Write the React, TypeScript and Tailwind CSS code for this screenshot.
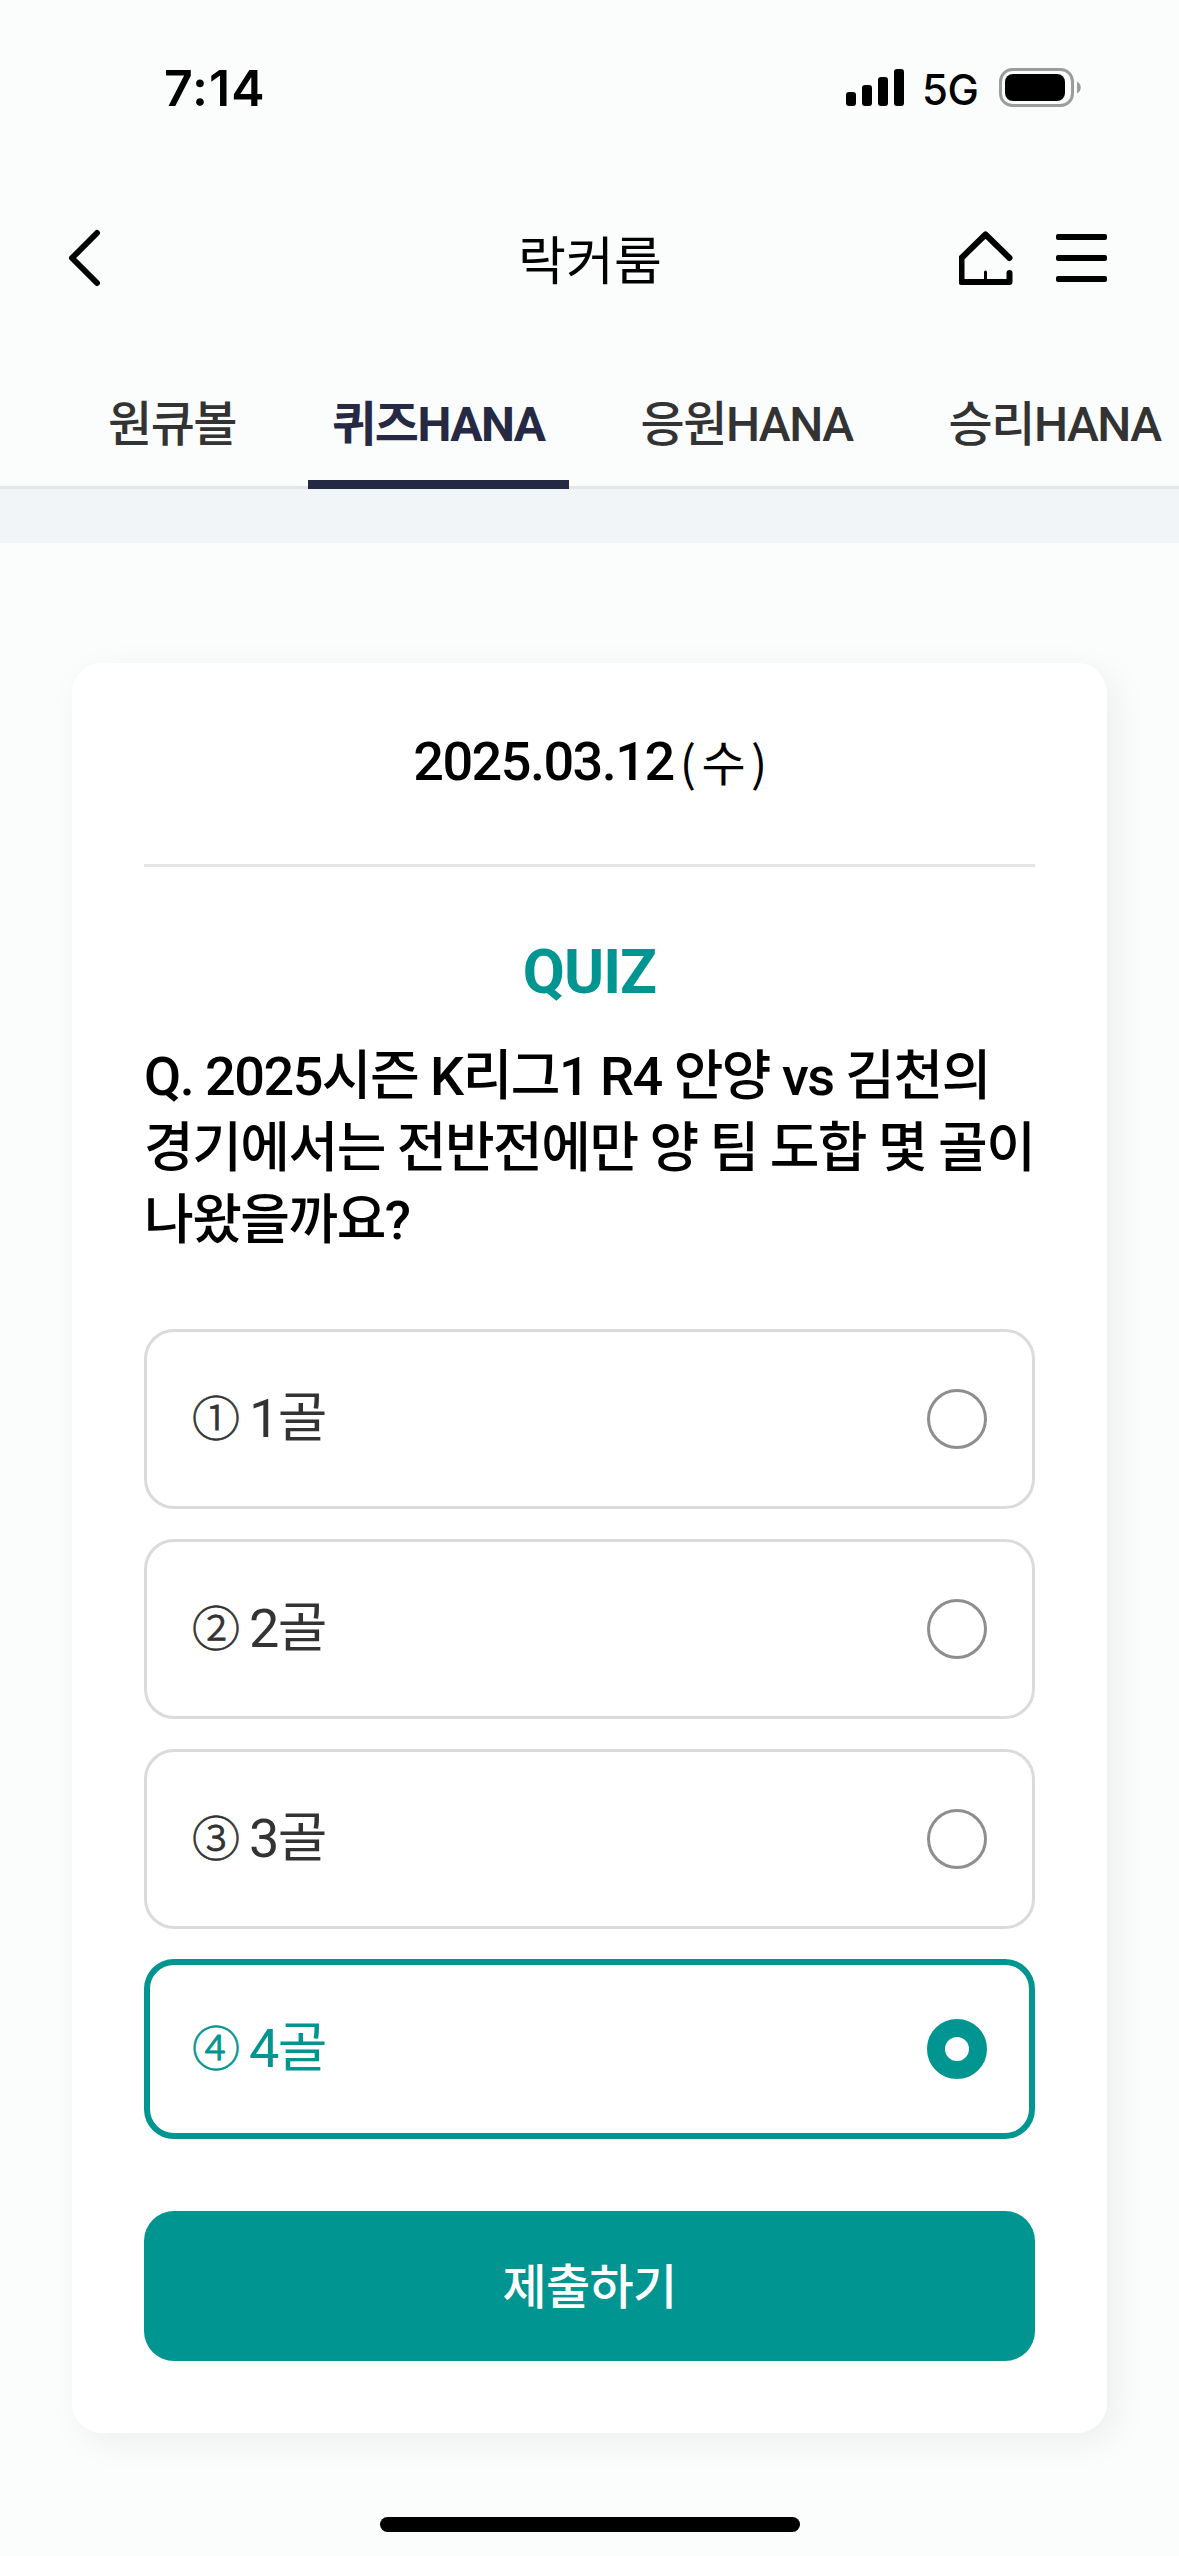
import React, { useState } from "react";
import clsx from "clsx";

const tabs = [
  { id: "ball", name: "원큐볼" },
  { id: "quiz", name: "퀴즈HANA" },
  { id: "cheer", name: "응원HANA" },
  { id: "win", name: "승리HANA" },
];

const options = [
  { id: 1, mark: "①", label: "1골" },
  { id: 2, mark: "②", label: "2골" },
  { id: 3, mark: "③", label: "3골" },
  { id: 4, mark: "④", label: "4골" },
];

const question = ["Q. 2025시즌 K리그1 R4 안양 vs 김천의", "경기에서는 전반전에만 양 팀 도합 몇 골이", "나왔을까요?"];

function StatusBar() {
  return (
    <div className="h-[177px] pt-[58px] pl-[164px] pr-[97px] flex justify-between items-start text-black">
      <span className="font-[Inter] font-semibold text-[50px] leading-[60px] tracking-[1px]">7:14</span>
      <div className="flex items-start pt-[10px]">
        <svg width="58" height="38" viewBox="0 0 58 38" className="mt-px">
          <rect x="0" y="23" width="10" height="14" rx="3" />
          <rect x="16" y="16" width="10" height="21" rx="3" />
          <rect x="32" y="8" width="10" height="29" rx="3" />
          <rect x="48" y="0" width="10" height="37" rx="3" />
        </svg>
        <span className="ml-[18px] w-[77px] font-[Inter] font-medium text-[42px] leading-[44px] tracking-[-0.5px]">5G</span>
        <svg width="83" height="40" viewBox="0 0 83 40">
          <rect x="1.5" y="1.5" width="72" height="36" rx="12" fill="none" stroke="#9b9c9b" strokeWidth="3" />
          <rect x="6" y="6" width="60" height="27" rx="8" />
          <path d="M78 13.5c5 2.500 5 9.500 0 12z" fill="#9b9c9b" />
        </svg>
      </div>
    </div>
  );
}

function Header() {
  return (
    <header className="h-[168px] pl-[68px] pr-[72px] flex items-start justify-between">
      <button aria-label="뒤로" className="mt-[52px] w-[151px]">
        <svg width="34" height="58" viewBox="0 0 34 58" fill="none" stroke="#000" strokeWidth="6" strokeLinecap="round" strokeLinejoin="round">
          <path d="M29 4L4 29l25 25" />
        </svg>
      </button>
      <h1 className="mt-[50px] pl-[4px] text-[52px] leading-[72px] tracking-[0.2px] font-normal text-black">락커룸</h1>
      <div className="w-[150px] mt-[53px] flex items-start justify-end">
        <button aria-label="홈">
          <svg width="56" height="56" viewBox="0 0 56 56" fill="none" stroke="#000" strokeWidth="6" strokeLinecap="round" strokeLinejoin="round">
            <path d="M50.500 28L26.500 4.500L2.500 28v24h48V43" />
            <path d="M26.500 42v9" strokeWidth="3" />
          </svg>
        </button>
        <button aria-label="메뉴" className="ml-[41px] mt-[4px] flex flex-col gap-[15px]">
          <span className="block w-[51px] h-[6px] rounded-[2px] bg-black" />
          <span className="block w-[51px] h-[6px] rounded-[2px] bg-black" />
          <span className="block w-[51px] h-[6px] rounded-[2px] bg-black" />
        </button>
      </div>
    </header>
  );
}

export default function App() {
  const [activeTab, setActiveTab] = useState("quiz");
  const [selected, setSelected] = useState(4);

  return (
    <div className="w-[1179px] h-[2556px] overflow-hidden flex flex-col bg-[#fbfdfc] font-[Roboto,'Noto_Sans_CJK_KR',sans-serif]">
      <StatusBar />
      <Header />

      {/* Tabs */}
      <nav className="h-[144px] shrink-0 pl-[84px] flex gap-[48px] overflow-hidden shadow-[inset_0_-3px_0_#e5e5e5]">
        {tabs.map((tab) => (
          <button
            key={tab.id}
            onClick={() => setActiveTab(tab.id)}
            className={clsx(
              "shrink-0 h-[144px] px-[24px] pt-[24px] text-[48px] tracking-[-0.031em] whitespace-nowrap border-b-[9px]",
              activeTab === tab.id ? "font-bold text-[#262944] border-[#262944]" : "font-medium text-[#333] border-transparent"
            )}
          >
            {tab.name}
          </button>
        ))}
      </nav>
      <div className="h-[54px] shrink-0 bg-[#f1f5f8]" />

      {/* Quiz card */}
      <main className="mt-[120px] mx-[72px] h-[1770px] shrink-0 px-[72px] rounded-[30px] bg-white shadow-[9px_9px_36px_rgba(0,0,0,0.06)]">
        <div className="h-[204px] pt-[60px] border-b-[3px] border-[#e5e5e5] flex justify-center text-[54px] leading-[78px] text-black">
          <span className="font-medium tracking-[-0.028em]">2025.03.12</span>
          <span className="ml-[6px] -mr-[7px] -mt-[2px] font-['Noto_Sans_CJK_KR',sans-serif] text-[48px] tracking-[5.5px]">(수)</span>
        </div>

        <h2 className="mt-[66px] text-center text-[61px] leading-[78px] font-bold tracking-[-0.015em] text-[#009591]">QUIZ</h2>
        <p className="mt-[30px] text-[54px] leading-[72px] font-medium tracking-[-0.028em] text-black whitespace-nowrap">
          {question.map((line) => (
            <span key={line} className="block">{line}</span>
          ))}
        </p>

        <ul className="mt-[72px] flex flex-col gap-[30px]">
          {options.map((option) => {
            const active = selected === option.id;
            return (
              <li key={option.id}>
                <button
                  onClick={() => setSelected(option.id)}
                  className={clsx(
                    "w-full h-[180px] rounded-[30px] flex items-center justify-between",
                    active ? "border-[6px] border-[#009591] text-[#009591] px-[42px]" : "border-[3px] border-[#dbdbdb] text-[#333] px-[45px]"
                  )}
                >
                  <span className="flex items-center text-[54px] leading-[78px] tracking-[-0.03em]">
                    <span className="w-[57px] mb-[8px] text-left font-['Noto_Sans_CJK_KR',sans-serif] font-light text-[48px] [-webkit-text-stroke:0.8px_currentColor]">
                      {option.mark}
                    </span>
                    {option.label}
                  </span>
                  <span
                    className={clsx(
                      "w-[60px] h-[60px] rounded-full",
                      active ? "border-[18px] border-[#009591]" : "border-[3px] border-[#8e8e8e]"
                    )}
                  />
                </button>
              </li>
            );
          })}
        </ul>

        <button className="mt-[72px] w-full h-[150px] pt-[3px] rounded-[30px] bg-[#009591] text-white text-[48px] font-medium tracking-[-0.015em]">
          제출하기
        </button>
      </main>

      <div className="mt-[84px] h-[15px] w-[420px] shrink-0 mx-auto rounded-full bg-black" />
    </div>
  );
}
